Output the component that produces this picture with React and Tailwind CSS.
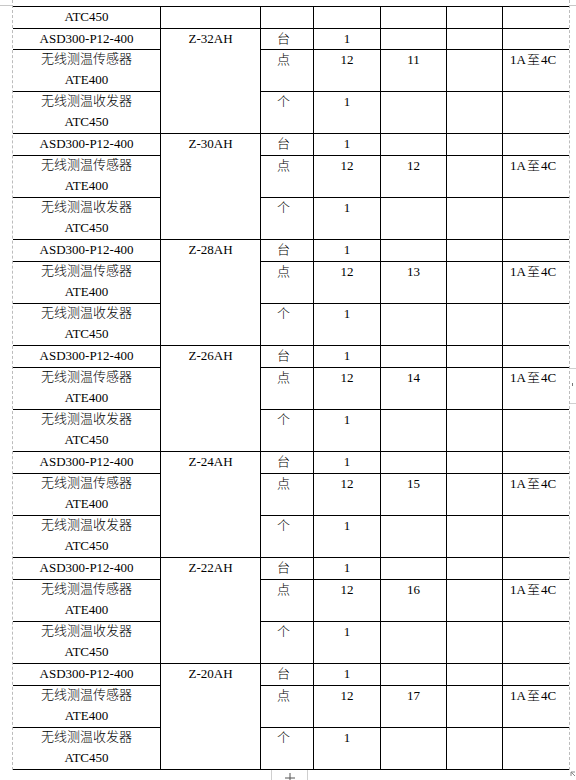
import React from "react";

const groups = [
  { model: "Z-32AH", count: "11" },
  { model: "Z-30AH", count: "12" },
  { model: "Z-28AH", count: "13" },
  { model: "Z-26AH", count: "14" },
  { model: "Z-24AH", count: "15" },
  { model: "Z-22AH", count: "16" },
  { model: "Z-20AH", count: "17" },
];

const cell = "border-b border-r border-black";
const last = "border-b border-black";

// the tail of the group that sits on the previous page
const TopRow = () => (
  <div className="grid h-[22px] grid-cols-[148px_100px_53px_67px_66px_56px_66px]">
    <div className={`${cell} text-center leading-[19px]`}>ATC450</div>
    <div className={cell} />
    <div className={cell} />
    <div className={cell} />
    <div className={cell} />
    <div className={cell} />
    <div className={last} />
  </div>
);

const Group = ({ model, count, first }) => (
  <div
    className={
      first
        ? "grid grid-cols-[148px_100px_53px_67px_66px_56px_66px] grid-rows-[21px_42px_42px]"
        : "grid grid-cols-[148px_100px_53px_67px_66px_56px_66px] grid-rows-[22px_42px_42px]"
    }
  >
    {/* 台 row */}
    <div className={`${cell} text-center leading-[19px]`}>ASD300-P12-400</div>
    <div className={`${cell} row-span-3 text-center leading-[19px]`}>{model}</div>
    <div className={`${cell} pl-[16px] leading-[19px]`}>台</div>
    <div className={`${cell} text-center leading-[19px]`}>1</div>
    <div className={cell} />
    <div className={cell} />
    <div className={last} />

    {/* 点 row */}
    <div className={`${cell} text-center leading-[21px]`}>
      <div className="-mt-[1px] leading-[20px]">无线测温传感器</div>
      <div>ATE400</div>
    </div>
    <div className={`${cell} pl-[16px] leading-[19px]`}>点</div>
    <div className={`${cell} text-center leading-[19px]`}>12</div>
    <div className={`${cell} text-center leading-[19px]`}>{count}</div>
    <div className={cell} />
    <div className={`${last} pl-[7px] leading-[19px]`}>
      1A<span className="mx-[1px]">至</span>4C
    </div>

    {/* 个 row */}
    <div className={`${cell} text-center leading-[21px]`}>
      <div className="-mt-[1px] leading-[20px]">无线测温收发器</div>
      <div>ATC450</div>
    </div>
    <div className={`${cell} pl-[16px] leading-[19px]`}>个</div>
    <div className={`${cell} text-center leading-[19px]`}>1</div>
    <div className={cell} />
    <div className={cell} />
    <div className={last} />
  </div>
);

export default function App() {
  return (
    <div className="relative h-[780px] w-[576px] overflow-hidden bg-white font-['Liberation_Serif','Noto_Sans_CJK_SC',serif] text-[13px] font-light text-black">
      {/* page corner marks */}
      <div className="absolute left-0 top-[5px] h-px w-[12px] bg-[#c8c8c8]" />
      <div className="absolute left-[570px] top-[5px] h-px w-[6px] bg-[#c8c8c8]" />

      <div className="ml-[12px] w-[558px] border-x border-dashed border-[#bcbcbc] pt-[6px]">
        <div className="border-t border-black">
          <TopRow />
          {groups.map((g, i) => (
            <Group key={g.model} model={g.model} count={g.count} first={i === 0} />
          ))}
        </div>
      </div>

      {/* row handle marks on the right edge */}
      <div className="absolute left-[570px] top-[368px] h-px w-[6px] bg-[#d0d0d0]" />
      <div className="absolute left-[572px] top-[383px] h-[3px] w-px bg-[#777]" />
      <div className="absolute left-[570px] top-[403px] h-px w-[6px] bg-[#d0d0d0]" />

      {/* add-row button under the table */}
      <div className="absolute left-[271px] top-[770px] flex h-[10px] w-[37px] justify-center border-x border-[#cfcfcf] bg-white">
        <svg width="12" height="10" viewBox="0 0 12 10">
          <path d="M6 3v7M1 8h10" stroke="#555" strokeWidth="1" fill="none" />
        </svg>
      </div>

      {/* resize grip */}
      <svg className="absolute left-[570px] top-[771px]" width="6" height="7" viewBox="0 0 6 7">
        <path d="M1 1h4M1 1v4M1 1l4 4" stroke="#888" strokeWidth="1" fill="none" />
      </svg>
    </div>
  );
}
